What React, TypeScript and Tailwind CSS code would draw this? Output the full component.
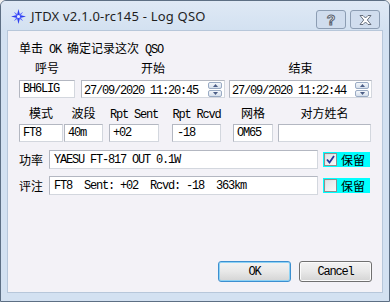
const mono = "font-['Liberation_Mono',monospace] text-[12px] tracking-[-1.2px]";
const cjk = "font-['Noto_Sans_CJK_SC',sans-serif] text-[12px] tracking-normal";

function T({ s }: { s: string }) {
  const parts = s.split(/([\u4e00-\u9fff]+)/);
  return (
    <>
      {parts.map((p, i) =>
        /[\u4e00-\u9fff]/.test(p) ? (
          <span key={i} className={cjk}>{p}</span>
        ) : (
          <span key={i} className={mono}>{p}</span>
        )
      )}
    </>
  );
}

function Field({ w, h = 18, value = "", pad = 3 }: { w: number; h?: number; value?: string; pad?: number }) {
  return (
    <div
      className="flex items-center border border-[#b3b7c1] border-b-[#d3d7de] border-r-[#d3d7de] bg-white whitespace-pre leading-[14px] text-black"
      style={{ width: w, height: h, paddingLeft: pad }}
    >
      <T s={value} />
    </div>
  );
}

function Spin() {
  return (
    <div className="flex flex-col gap-[1px]">
      <div className="w-[14px] h-[7px] rounded-[2px] border border-[#9aabc4] bg-gradient-to-b from-[#f4f7fb] to-[#d6e0ec] flex items-center justify-center">
        <svg width="5" height="3" viewBox="0 0 5 3"><path d="M0 3 L2.5 0 L5 3 Z" fill="#4b5d86" /></svg>
      </div>
      <div className="w-[14px] h-[7px] rounded-[2px] border border-[#9aabc4] bg-gradient-to-b from-[#f4f7fb] to-[#d6e0ec] flex items-center justify-center">
        <svg width="5" height="3" viewBox="0 0 5 3"><path d="M0 0 L2.5 3 L5 0 Z" fill="#4b5d86" /></svg>
      </div>
    </div>
  );
}

function DateBox({ w, value }: { w: number; value: string }) {
  return (
    <div
      className="flex items-center justify-between h-[18px] border border-[#b3b7c1] border-b-[#d3d7de] border-r-[#d3d7de] bg-white pl-[2px] pr-[2px] leading-[14px]"
      style={{ width: w }}
    >
      <span className="whitespace-pre"><T s={value} /></span>
      <Spin />
    </div>
  );
}

function Col({ label, w, children }: { label: string; w: number; children: React.ReactNode }) {
  return (
    <div className="flex flex-col items-center" style={{ width: w }}>
      <div className="h-[14px] leading-[14px] whitespace-pre">
        <T s={label} />
      </div>
      {children}
    </div>
  );
}

function Keep({ checked }: { checked: boolean }) {
  return (
    <div className="flex items-center w-[47px] h-[15px] bg-[#00ffff] pl-[1px] gap-[4px]">
      <div className="w-[13px] h-[13px] border border-[#8e8f8f] bg-gradient-to-br from-[#dcdcdc] to-[#fbfbfb] p-[1px] flex items-center justify-center">
        <div className="w-full h-full bg-gradient-to-br from-[#e2e4e7] to-[#f7f7f7] flex items-center justify-center">
          {checked && (
            <svg width="9" height="9" viewBox="0 0 9 9">
              <path d="M1 4.5 L3.5 7.5 L8 1" stroke="#26389a" strokeWidth="1.8" fill="none" />
            </svg>
          )}
        </div>
      </div>
      <span className={cjk + " leading-[14px] text-black"}>保留</span>
    </div>
  );
}

function Btn({ label, def }: { label: string; def?: boolean }) {
  return (
    <div
      className={
        "w-[73px] h-[21px] rounded-[3px] border flex items-center justify-center bg-gradient-to-b from-[#f3f3f3] via-[#e8e8e8] to-[#d4d4d4] " +
        (def ? "border-[#3c8fd0] shadow-[inset_0_0_0_1px_#8ed2f4]" : "border-[#707070] shadow-[inset_0_0_0_1px_#fbfbfb]")
      }
    >
      <span className={mono + " leading-[14px] text-black"}>{label}</span>
    </div>
  );
}

export default function App() {
  return (
    <div className="w-[390px] h-[302px] bg-[#f0f0f0]">
      <div className="w-[390px] h-[302px] flex flex-col bg-[#d3e1f1] border border-[#5d6f84] rounded-t-[6px] overflow-hidden">
        {/* title bar */}
        <div className="h-[29px] flex items-center pl-[10px] pr-[9px] bg-gradient-to-b from-[#dfe9f5] to-[#d3e1f1]">
          <svg width="15" height="15" viewBox="0 0 16 16" className="mt-[2px]">
            <path d="M8 0 L9.6 6.4 L16 8 L9.6 9.6 L8 16 L6.4 9.6 L0 8 L6.4 6.4 Z" fill="#2f3ff0" />
            <path d="M3 3 L8 6.5 L13 3 L9.5 8 L13 13 L8 9.5 L3 13 L6.5 8 Z" fill="#5a68ff" />
            <circle cx="8" cy="8" r="1.6" fill="#e8ecff" />
          </svg>
          <span className="ml-[5px] mt-[1px] font-['Noto_Sans',sans-serif] text-[13px] tracking-[0.2px] text-[#1e1e1e] leading-[16px]">
            JTDX v2.1.0-rc145 - Log QSO
          </span>
          <div className="ml-auto flex gap-[4px] mt-[9px] self-start">
            <div className="w-[30px] h-[19px] rounded-[3px] border border-[#8c9db3] bg-[#d0ddee] flex items-center justify-center">
              <span className="font-['Liberation_Sans',sans-serif] font-bold text-[14px] leading-[14px] text-white [-webkit-text-stroke:1px_#5a6270]">?</span>
            </div>
            <div className="w-[30px] h-[19px] rounded-[3px] border border-[#8c9db3] bg-[#d0ddee] flex items-center justify-center">
              <svg width="13" height="10" viewBox="0 0 13 10">
                <path d="M1 0.5 L4 0.5 L6.5 3 L9 0.5 L12 0.5 L8.3 5 L12 9.5 L9 9.5 L6.5 7 L4 9.5 L1 9.5 L4.7 5 Z" fill="#ffffff" stroke="#5a6270" strokeWidth="0.9" />
              </svg>
            </div>
          </div>
        </div>

        {/* client */}
        <div className="flex-1 flex px-[6px] pb-[8px]">
          <div className="flex-1 flex flex-col bg-[#f3f2f7] border border-[#b7c7da] pl-[11px] pr-[10px] pb-[10px] text-black">
            <div className="mt-[9px] h-[14px] leading-[14px] whitespace-pre">
              <T s="单击 OK 确定记录这次 QSO" />
            </div>

            {/* row 1 */}
            <div className="mt-[6px] flex">
              <Col label="呼号" w={56}>
                <div className="mt-[6px]"><Field w={56} value="BH6LIG" /></div>
              </Col>
              <div className="ml-[6px]">
                <Col label="开始" w={144}>
                  <div className="mt-[6px]"><DateBox w={144} value="27/09/2020 11:20:45" /></div>
                </Col>
              </div>
              <div className="ml-[4px]">
                <Col label="结束" w={143}>
                  <div className="mt-[6px]"><DateBox w={143} value="27/09/2020 11:22:44" /></div>
                </Col>
              </div>
            </div>

            {/* row 2 */}
            <div className="mt-[7px] flex">
              <Col label="模式" w={44}>
                <div className="mt-[5px]"><Field w={44} value="FT8" /></div>
              </Col>
              <div className="ml-[1px]">
                <Col label="波段" w={39}>
                  <div className="mt-[5px]"><Field w={39} value="40m" /></div>
                </Col>
              </div>
              <div className="ml-[6px]">
                <Col label="Rpt Sent" w={50}>
                  <div className="mt-[5px]"><Field w={50} value="+02" /></div>
                </Col>
              </div>
              <div className="ml-[13px]">
                <Col label="Rpt Rcvd" w={49}>
                  <div className="mt-[5px]"><Field w={49} value="-18" pad={4} /></div>
                </Col>
              </div>
              <div className="ml-[12px]">
                <Col label="网格" w={40}>
                  <div className="mt-[5px]"><Field w={40} value="OM65" /></div>
                </Col>
              </div>
              <div className="ml-[5px]">
                <Col label="对方姓名" w={93}>
                  <div className="mt-[5px]"><Field w={93} /></div>
                </Col>
              </div>
            </div>

            {/* row 3 */}
            <div className="mt-[8px] flex items-center h-[19px]">
              <span className={cjk + " leading-[14px] w-[30px]"}>功率</span>
              <Field w={269} h={19} value="YAESU FT-817 OUT 0.1W" pad={4} />
              <div className="ml-[5px]"><Keep checked /></div>
            </div>

            {/* row 4 */}
            <div className="mt-[7px] flex items-center h-[19px]">
              <span className={cjk + " leading-[14px] w-[30px]"}>评注</span>
              <Field w={269} h={19} value="FT8  Sent: +02  Rcvd: -18  363km" pad={4} />
              <div className="ml-[5px]"><Keep checked={false} /></div>
            </div>

            {/* buttons */}
            <div className="mt-auto flex justify-end gap-[8px]">
              <Btn label="OK" def />
              <Btn label="Cancel" />
            </div>
          </div>
        </div>
      </div>
    </div>
  );
}
